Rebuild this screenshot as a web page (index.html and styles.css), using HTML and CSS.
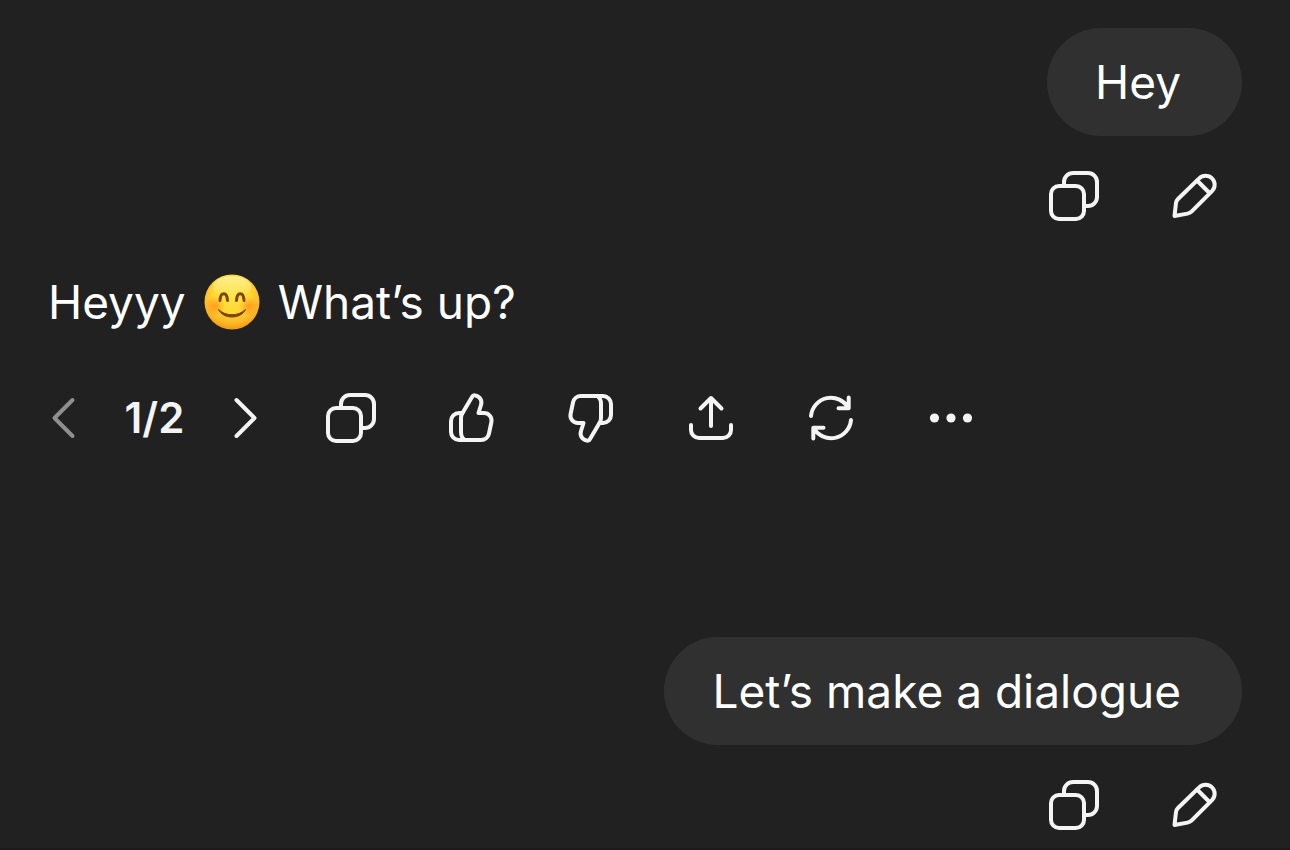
FILE: index.html
```html
<!DOCTYPE html>
<html lang="en">
  <head>
    <meta charset="UTF-8" />
    <meta name="viewport" content="width=device-width, initial-scale=1.0" />
    <title>Chat</title>
    <link rel="stylesheet" href="styles.css">
  </head>

  <body>
    <!-- shared icons -->
    <svg class="sprite" aria-hidden="true">
      <symbol id="copy" viewBox="0 0 60 60">
        <rect x="7" y="20" width="33" height="33" rx="8" />
        <path d="M20 20v-4a9 9 0 0 1 9-9h15a9 9 0 0 1 9 9v15a9 9 0 0 1-9 9h-4" />
      </symbol>
      <symbol id="pencil" viewBox="0 0 60 60">
        <path d="M10.5 50L12 37Q12.3 34.7 14 33L35.2 12.4A9 9 0 0 1 48 25.2L27.5 45.700Q26 47.200 23.500 47.600Z" />
        <path d="M33 14.500l12.500 12.500" />
      </symbol>
      <symbol id="thumb" viewBox="0 0 60 60">
        <path d="M18 52a8 8 0 0 1-8-8V33a8 8 0 0 1 8-8h3.5L31 9Q32 7 34 7.4C39 8.4 41.4 12.5 40 17L37.5 25H43a7.5 7.5 0 0 1 7.4 9l-2.4 11.5a8 8 0 0 1-8 6.5Z" />
        <path d="M21.5 25Q20 27 20 30V44Q20 50 24 52" />
      </symbol>
    </svg>

    <main class="chat">
      <section class="msg user">
        <p class="bubble">Hey</p>
        <div class="actions">
          <button class="icon-btn" aria-label="Copy"><svg class="icon"><use href="#copy" /></svg></button>
          <button class="icon-btn" aria-label="Edit"><svg class="icon"><use href="#pencil" /></svg></button>
        </div>
      </section>

      <section class="msg bot">
        <p class="reply">
          <span>Heyyy</span>
          <svg class="emoji" viewBox="0 0 56 56" role="img" aria-label="Smiling face">
            <defs>
              <radialGradient id="face" cx="50%" cy="36%" r="66%">
                <stop offset="0" stop-color="#ffe544" />
                <stop offset="0.5" stop-color="#ffd936" />
                <stop offset="0.8" stop-color="#fcb827" />
                <stop offset="1" stop-color="#ef9318" />
              </radialGradient>
              <radialGradient id="blush">
                <stop offset="0" stop-color="#ff8518" stop-opacity="0.7" />
                <stop offset="1" stop-color="#ff8518" stop-opacity="0" />
              </radialGradient>
              <linearGradient id="shine" x1="0" y1="0" x2="0" y2="1">
                <stop offset="0" stop-color="#fff6a8" stop-opacity="0.8" />
                <stop offset="1" stop-color="#fff6a8" stop-opacity="0" />
              </linearGradient>
            </defs>
            <circle cx="28" cy="28" r="27.5" fill="url(#face)" />
            <ellipse cx="28" cy="13" rx="19" ry="11" fill="url(#shine)" />
            <ellipse cx="11" cy="32" rx="10" ry="10" fill="url(#blush)" />
            <ellipse cx="45" cy="32" rx="10" ry="10" fill="url(#blush)" />
            <path class="feature" d="M16 26.5C16.500 17.500 23 17.500 23.500 26.500M32.500 26.500C33 17.500 39.500 17.500 40 26.500" />
            <path d="M14.500 35.500C22 42.500 34 42.500 41.500 35.500C37 45.500 19 45.500 14.500 35.500Z" fill="#7b4608" stroke="#7b4608" stroke-linejoin="round" />
          </svg>
          <span>What’s up?</span>
        </p>
        <div class="actions">
          <div class="pager">
            <button class="icon-btn" aria-label="Previous" disabled><svg class="icon chevron" viewBox="0 0 30 60"><path d="M24.5 12l-18 18 18 18" /></svg></button>
            <span class="count">1/2</span>
            <button class="icon-btn" aria-label="Next"><svg class="icon chevron" viewBox="0 0 30 60"><path d="M5.5 12l18 18-18 18" /></svg></button>
          </div>
          <button class="icon-btn" aria-label="Copy"><svg class="icon"><use href="#copy" /></svg></button>
          <button class="icon-btn" aria-label="Good response"><svg class="icon"><use href="#thumb" /></svg></button>
          <button class="icon-btn" aria-label="Bad response"><svg class="icon flip"><use href="#thumb" /></svg></button>
          <button class="icon-btn" aria-label="Share">
            <svg class="icon" viewBox="0 0 60 60"><path d="M30 38V10M19.5 20.5L30 10l10.5 10.5M10 37v5a8 8 0 0 0 8 8h24a8 8 0 0 0 8-8v-5" /></svg>
          </button>
          <button class="icon-btn" aria-label="Regenerate">
            <svg class="icon" viewBox="0 0 60 60"><path d="M10 28A20 20 0 0 1 47.5 20.2M47.7 9.5v10.7H37.5M50 32A20 20 0 0 1 12.5 39.8M12.3 50.5V39.8H22.5" /></svg>
          </button>
          <button class="icon-btn" aria-label="More">
            <svg class="icon dots" viewBox="0 0 60 60"><circle cx="13.5" cy="30" r="4.6" /><circle cx="30" cy="30" r="4.6" /><circle cx="46.5" cy="30" r="4.6" /></svg>
          </button>
        </div>
      </section>

      <section class="msg user">
        <p class="bubble">Let’s make a dialogue</p>
        <div class="actions">
          <button class="icon-btn" aria-label="Copy"><svg class="icon"><use href="#copy" /></svg></button>
          <button class="icon-btn" aria-label="Edit"><svg class="icon"><use href="#pencil" /></svg></button>
        </div>
      </section>
    </main>
  </body>
</html>
```
FILE: styles.css
```css
* {
  box-sizing: border-box;
}

body {
  margin: 0;
  min-height: 100vh;
  border-bottom: 2px solid #1c191d;
  background-color: #212121;
  color: white;
  font-family: Inter, "Liberation Sans", sans-serif;
  font-size: 46px;
  line-height: 60px;
}

p {
  margin: 0;
}

.sprite {
  display: none;
}

.chat {
  display: flex;
  flex-direction: column;
  padding: 28px 48px 0;
}

.msg {
  display: flex;
  flex-direction: column;
}

.user {
  align-items: flex-end;
}

.bubble {
  padding: 24px 61px 24px 48px;
  border-radius: 54px;
  background-color: #303030;
}

.actions {
  display: flex;
  align-items: center;
  gap: 60px;
}

.user .actions {
  margin-top: 30px;
  padding-right: 18px;
}

.bot {
  gap: 56px;
  padding: 46px 0 189px;
}

.reply {
  display: flex;
  align-items: center;
  gap: 18px;
}

.emoji {
  width: 56px;
  height: 56px;
}

.feature {
  fill: none;
  stroke: #7b4608;
  stroke-width: 3;
  stroke-linecap: round;
}

.icon-btn {
  display: flex;
  padding: 0;
  border: none;
  background: none;
  color: #f4f4f4;
  cursor: pointer;
}

.icon-btn:disabled {
  color: #8f8f8f;
  cursor: default;
}

.icon {
  width: 60px;
  height: 60px;
  fill: none;
  stroke: currentColor;
  stroke-width: 4;
  stroke-linecap: round;
  stroke-linejoin: round;
}

.flip {
  transform: rotate(180deg);
}

.dots {
  fill: currentColor;
  stroke: none;
}

.pager {
  display: flex;
  align-items: center;
}

.chevron {
  width: 30px;
}

.count {
  min-width: 153px;
  color: #f4f4f4;
  font-size: 42px;
  font-weight: 600;
  text-align: center;
}
```
